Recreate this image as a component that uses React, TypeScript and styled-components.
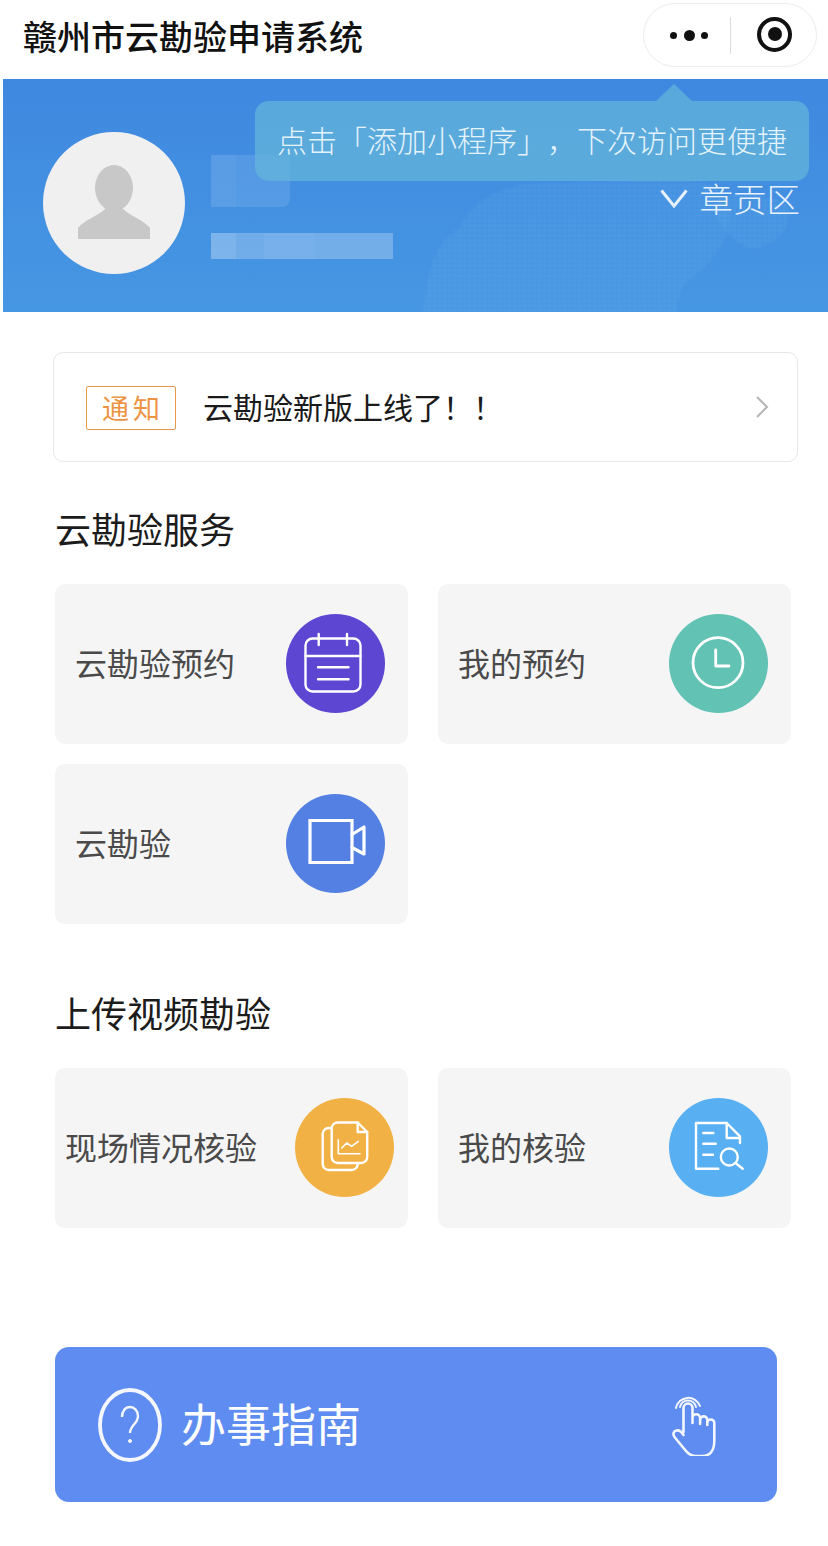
import type { ReactNode } from "react";
import styled, { createGlobalStyle } from "styled-components";

const GlobalStyle = createGlobalStyle`
  html, body {
    margin: 0;
    padding: 0;
    background: #fff;
    font-family: "Noto Sans CJK SC", "Liberation Sans", sans-serif;
  }
  * { box-sizing: border-box; }
`;

const Page = styled.div`
  width: 828px;
  padding-bottom: 44px;
  overflow: hidden;
`;

/* nav bar */
const NavBar = styled.header`
  height: 79px;
  display: flex;
  justify-content: space-between;
  align-items: flex-start;
  padding: 3px 11px 0 23px;
`;

const NavTitle = styled.h1`
  margin: 6px 0 0;
  font-size: 34px;
  line-height: 54px;
  font-weight: 500;
  color: #111;
  white-space: nowrap;
`;

const Capsule = styled.div`
  width: 174px;
  height: 64px;
  border: 1px solid #ececec;
  border-radius: 32px;
  display: flex;
  align-items: center;
  padding-left: 26px;
`;

const Dots = styled.div`
  width: 38px;
  display: flex;
  align-items: center;
  justify-content: space-between;
`;

const Dot = styled.span<{ $size: number }>`
  width: ${({ $size }) => $size}px;
  height: ${({ $size }) => $size}px;
  border-radius: 50%;
  background: #111;
`;

const CapsuleDivider = styled.span`
  width: 1px;
  height: 37px;
  background: #ddd;
  margin: 0 26px 0 22px;
`;

const TargetRing = styled.span`
  width: 35px;
  height: 35px;
  margin-bottom: 2px;
  border: 4px solid #111;
  border-radius: 50%;
  display: flex;
  align-items: center;
  justify-content: center;
  &::after {
    content: "";
    width: 14px;
    height: 14px;
    border-radius: 50%;
    background: #111;
  }
`;

/* profile banner */
const Banner = styled.section`
  position: relative;
  margin-left: 3px;
  height: 233px;
  display: flex;
  align-items: flex-start;
  background: linear-gradient(180deg, #3f88e0 0%, #4697e3 100%);
  overflow: hidden;
`;

const MapLayer = styled.svg`
  position: absolute;
  left: 0;
  top: 0;
  filter: blur(1px);
`;

const Avatar = styled.div`
  position: relative;
  width: 142px;
  height: 142px;
  margin: 53px 0 0 40px;
  flex: none;
  border-radius: 50%;
  background: #f0f0f0;
`;

const UserInfo = styled.div`
  position: relative;
  margin: 76px 0 0 26px;
  display: flex;
  flex-direction: column;
  align-items: flex-start;
  gap: 26px;
`;

const BlurName = styled.div`
  width: 79px;
  height: 52px;
  border-radius: 0 0 8px 0;
  background: linear-gradient(90deg, rgba(255, 255, 255, 0.13) 0 32%, rgba(255, 255, 255, 0.1) 32% 100%);
`;

const BlurId = styled.div`
  width: 182px;
  height: 26px;
  background: linear-gradient(
    90deg,
    rgba(255, 255, 255, 0.3) 0 14%,
    rgba(255, 255, 255, 0.24) 14% 29%,
    rgba(255, 255, 255, 0.27) 29% 57%,
    rgba(255, 255, 255, 0.25) 57% 100%
  );
`;

const Location = styled.div`
  position: relative;
  margin: 99px 28px 0 auto;
  display: flex;
  align-items: center;
  gap: 12px;
  font-size: 33.5px;
  line-height: 40px;
  font-weight: 300;
  color: #e6f1fc;
`;

const AddTip = styled.div`
  position: absolute;
  left: 252px;
  top: 22px;
  width: 554px;
  height: 80px;
  padding-left: 22px;
  border-radius: 14px;
  background: rgba(101, 183, 218, 0.7);
  font-size: 30px;
  line-height: 76px;
  font-weight: 300;
  color: #e4f3fb;
  white-space: nowrap;
  text-spacing-trim: space-all;
  &::before {
    content: "";
    position: absolute;
    left: 401px;
    top: -17px;
    border-left: 18px solid transparent;
    border-right: 18px solid transparent;
    border-bottom: 17px solid rgba(101, 183, 218, 0.7);
  }
`;

/* notice */
const Notice = styled.div`
  width: 745px;
  height: 110px;
  margin: 40px 0 0 53px;
  padding: 0 28px 0 32px;
  display: flex;
  align-items: center;
  border: 1px solid #e6e6e6;
  border-radius: 10px;
`;

const NoticeTag = styled.span`
  width: 90px;
  height: 44px;
  margin: 2px 27px 0 0;
  border: 1.5px solid #e9994a;
  border-radius: 2px;
  display: flex;
  align-items: center;
  justify-content: center;
  gap: 4px;
  font-size: 27px;
  line-height: 40px;
  color: #ec9443;
`;

const NoticeText = styled.span`
  flex: 1;
  margin-bottom: 2px;
  font-size: 30px;
  line-height: 44px;
  color: #1a1a1a;
`;

/* sections */
const SectionTitle = styled.h2<{ $top: number }>`
  margin: ${({ $top }) => $top}px 0 31px 55px;
  font-size: 36px;
  line-height: 50px;
  font-weight: 400;
  color: #1c1c1c;
`;

const CardGrid = styled.div`
  margin-left: 55px;
  display: grid;
  grid-template-columns: 353px 353px;
  grid-auto-rows: 160px;
  gap: 20px 30px;
`;

const Card = styled.div<{ $tight?: boolean }>`
  display: flex;
  align-items: center;
  justify-content: space-between;
  padding: 0 ${({ $tight }) => ($tight ? 14 : 23)}px 1px ${({ $tight }) => ($tight ? 10 : 20)}px;
  border-radius: 10px;
  background: #f5f5f5;
`;

const CardLabel = styled.span`
  margin-bottom: 4px;
  font-size: 32px;
  line-height: 46px;
  color: #4a4a4a;
  white-space: nowrap;
`;

const IconCircle = styled.div<{ $color: string }>`
  width: 99px;
  height: 99px;
  flex: none;
  border-radius: 50%;
  background: ${({ $color }) => $color};
`;

const IconSvg = styled.svg<{ $weight?: number }>`
  display: block;
  fill: none;
  stroke: #fff;
  stroke-width: ${({ $weight }) => $weight ?? 2.4}px;
  stroke-linecap: round;
  stroke-linejoin: round;
`;

/* guide button */
const GuideButton = styled.div`
  width: 722px;
  height: 155px;
  margin: 119px 0 0 55px;
  padding: 0 59px 0 43px;
  display: flex;
  align-items: center;
  border-radius: 14px;
  background: #5e8cf0;
  color: #fff;
`;

const GuideText = styled.span`
  flex: 1;
  margin: 0 0 4px 19px;
  font-size: 45px;
  line-height: 60px;
`;

const Icon = ({ children, weight }: { children: ReactNode; weight?: number }) => (
  <IconSvg $weight={weight} width="99" height="99" viewBox="0 0 99 99">
    {children}
  </IconSvg>
);

const CalendarIcon = () => (
  <Icon>
    <rect x="19.5" y="24.5" width="55" height="53" rx="7" />
    <path d="M19.5 42h55M32.7 20v11M61 20v11M32 53.3h30.5M32 65.3h30.5" />
  </Icon>
);

const ClockIcon = () => (
  <Icon weight={2.8}>
    <circle cx="49" cy="48.7" r="25" />
    <path d="M46.7 36v16H60" />
  </Icon>
);

const VideoIcon = () => (
  <Icon weight={3.2}>
    <path d="M24 26.5h42v42H24z" strokeLinejoin="miter" />
    <path d="M66 40.5l12-7.5v27l-12-6.5" />
  </Icon>
);

const ReportIcon = () => (
  <Icon>
    <path d="M36.7 30h-3a6 6 0 0 0-6 6v30a6 6 0 0 0 6 6h23a6 6 0 0 0 6-6v-1" />
    <path d="M42.7 24.5h20l9.5 9.500v25a6 6 0 0 1-6 6H42.7a6 6 0 0 1-6-6V30.500a6 6 0 0 1 6-6z" />
    <path d="M62.7 24.5V34h9.5" />
    <path d="M43.3 41.7v14H65" strokeWidth="1.6" />
    <path d="M46.7 50l5-5 5 3.3 6.6-5" strokeWidth="1.6" />
  </Icon>
);

const DocSearchIcon = () => (
  <Icon>
    <path d="M49.3 70.7H27V25h30.7L71 38.3V45" />
    <path d="M57.7 25v15H71" />
    <path d="M34.3 35h10M34.3 45.7h12.5M34.3 56.7H44" />
    <circle cx="60.3" cy="59" r="8.5" />
    <path d="M66.5 65l7.2 5.7" />
  </Icon>
);

const PointerIcon = () => (
  <IconSvg $weight={2.6} width="47" height="62" viewBox="0 0 47 62" opacity="0.92">
    <path d="M12.5 38V14a4.5 4.5 0 0 1 9 0v15v-5a3.8 3.8 0 0 1 7.6 0v6v-4a3.6 3.6 0 0 1 7.2 0v5v-2a3.5 3.5 0 0 1 7 0v18c0 9-4 15-12 15h-7c-5 0-8-3-11-7L3.5 43c-2-3-1-6 2-6.5c2.5-.5 5 1 7 4.5" />
    <path d="M9 13a8.2 8.2 0 0 1 16 0M5 14a12.5 12.5 0 0 1 24-2" strokeWidth="2" />
  </IconSvg>
);

export default function App() {
  return (
    <Page>
      <GlobalStyle />
      <NavBar>
        <NavTitle>赣州市云勘验申请系统</NavTitle>
        <Capsule>
          <Dots>
            <Dot $size={7} />
            <Dot $size={11} />
            <Dot $size={7} />
          </Dots>
          <CapsuleDivider />
          <TargetRing />
        </Capsule>
      </NavBar>

      <Banner>
        <MapLayer width="825" height="233" viewBox="0 0 825 233">
          <defs>
            <pattern id="mapDots" width="5" height="5" patternUnits="userSpaceOnUse">
              <rect width="3.5" height="3.5" fill="#7cc0ee" opacity="0.22" />
            </pattern>
          </defs>
          <path
            d="M420 233c4-40 12-70 36-84c14-30 50-48 100-46l130-4c30 4 44 22 40 46c-6 30-26 44-44 60c-6 12-8 20-8 28z"
            fill="url(#mapDots)"
          />
          <path d="M715 120c20-8 50-6 70 6c6 22-10 40-36 44c-20-6-40-26-34-50z" fill="url(#mapDots)" />
        </MapLayer>
        <Avatar>
          <svg width="142" height="142" viewBox="0 0 142 142">
            <ellipse cx="71" cy="56" rx="19" ry="23" fill="#c8c8c8" />
            <path
              d="M35 107V96c6-8 20-12 27-19c1-2 1-4 0-6h18c-1 2-1 4 0 6c7 7 21 11 27 19v11z"
              fill="#c8c8c8"
            />
          </svg>
        </Avatar>
        <UserInfo>
          <BlurName />
          <BlurId />
        </UserInfo>
        <Location>
          <svg width="28" height="19" viewBox="0 0 28 19" fill="none" stroke="#e6f1fc" strokeWidth="3">
            <path d="M1.5 1.5L14 17L26.5 1.5" />
          </svg>
          章贡区
        </Location>
        <AddTip>点击「添加小程序」，下次访问更便捷</AddTip>
      </Banner>

      <Notice>
        <NoticeTag>
          <span>通</span>
          <span>知</span>
        </NoticeTag>
        <NoticeText>云勘验新版上线了！！</NoticeText>
        <svg width="14" height="24" viewBox="0 0 14 24" fill="none" stroke="#b5b5b5" strokeWidth="2">
          <path d="M2 2l10 10L2 22" />
        </svg>
      </Notice>

      <SectionTitle $top={41}>云勘验服务</SectionTitle>
      <CardGrid>
        <Card>
          <CardLabel>云勘验预约</CardLabel>
          <IconCircle $color="#5d46d2">
            <CalendarIcon />
          </IconCircle>
        </Card>
        <Card>
          <CardLabel>我的预约</CardLabel>
          <IconCircle $color="#62c2b4">
            <ClockIcon />
          </IconCircle>
        </Card>
        <Card>
          <CardLabel>云勘验</CardLabel>
          <IconCircle $color="#5380e2">
            <VideoIcon />
          </IconCircle>
        </Card>
      </CardGrid>

      <SectionTitle $top={63}>上传视频勘验</SectionTitle>
      <CardGrid>
        <Card $tight>
          <CardLabel>现场情况核验</CardLabel>
          <IconCircle $color="#f2b145">
            <ReportIcon />
          </IconCircle>
        </Card>
        <Card>
          <CardLabel>我的核验</CardLabel>
          <IconCircle $color="#58aff2">
            <DocSearchIcon />
          </IconCircle>
        </Card>
      </CardGrid>

      <GuideButton>
        <svg width="64" height="74" viewBox="0 0 64 74" fill="none" stroke="#f4f7ff" strokeWidth="3.8">
          <ellipse cx="32" cy="37" rx="30" ry="35" />
          <path d="M24 29c0-6 3.5-10 8-10s8 4 8 9c0 8-8 9-8 17" strokeWidth="2.4" />
          <circle cx="32" cy="53" r="1.5" fill="#f4f7ff" strokeWidth="1" />
        </svg>
        <GuideText>办事指南</GuideText>
        <PointerIcon />
      </GuideButton>
    </Page>
  );
}
